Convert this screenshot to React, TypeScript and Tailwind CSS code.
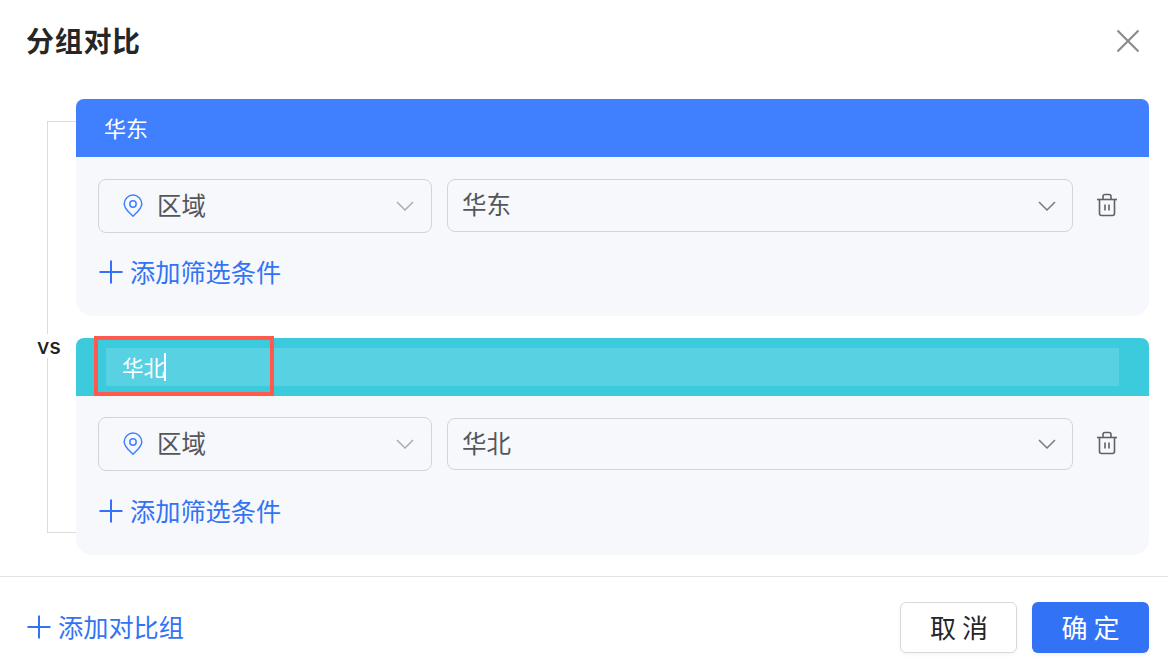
import React from "react";

function Pin() {
  return (
    <svg width="20" height="24" viewBox="0 0 20 24" fill="none" stroke="#4080ff" strokeWidth="1.5">
      <path d="M10 22.2C6.8 19 1.2 14.6 1.2 9.9a8.8 8.8 0 0 1 17.6 0c0 4.7-5.6 9.1-8.8 12.3Z" strokeLinejoin="round" />
      <circle cx="10" cy="10" r="3.2" />
    </svg>
  );
}

function Chevron({ color = "#a9acb3" }: { color?: string }) {
  return (
    <svg width="18" height="10" viewBox="0 0 18 10" fill="none" stroke={color} strokeWidth="1.5">
      <path d="M1 1l8 8 8-8" />
    </svg>
  );
}

function Trash() {
  return (
    <svg width="22" height="24" viewBox="0 0 22 24" fill="none" stroke="#5f6166" strokeWidth="1.6">
      <path d="M1 6.5h20" />
      <path d="M7 6.5V3.5a2 2 0 0 1 2-2h4a2 2 0 0 1 2 2v3" />
      <path d="M3.5 6.5v14a2 2 0 0 0 2 2h11a2 2 0 0 0 2-2v-14" />
      <path d="M9 11.5v6M13 11.5v6" />
    </svg>
  );
}

function Plus() {
  return (
    <svg width="24" height="24" viewBox="0 0 24 24" fill="none" stroke="#3273f6" strokeWidth="2">
      <path d="M0.5 12h23M12 0.5v23" />
    </svg>
  );
}

function Condition({ value, second }: { value: string; second?: boolean }) {
  return (
    <div className={second ? "flex flex-col px-[22px] pt-[21px]" : "flex flex-col px-[22px] pt-[22px]"}>
      <div className="flex items-start">
        <div className="flex h-[54px] w-[334px] items-center rounded-lg border border-[#d3d4d9] pl-[24px] pr-[17px]">
          <Pin />
          <span className="mb-[2px] ml-[14px] flex-1 text-[24.5px] leading-none text-[#555659]">区域</span>
          <Chevron />
        </div>
        <div
          className={
            second
              ? "mt-[1px] ml-[15px] flex h-[52px] w-[626px] items-center justify-between rounded-lg border border-[#d3d4d9] pl-[15px] pr-[16px]"
              : "ml-[15px] flex h-[53px] w-[626px] items-center justify-between rounded-lg border border-[#d3d4d9] pl-[15px] pr-[16px]"
          }
        >
          <span className="mb-[2px] -ml-[1px] text-[24.5px] leading-none text-[#555659]">{value}</span>
          <Chevron color="#77797e" />
        </div>
        <div className="mt-[14px] ml-[23px] flex w-[22px] items-center justify-center">
          <Trash />
        </div>
      </div>
      <div className={second ? "mt-[27px] flex h-[26px] items-center pl-[1px]" : "mt-[26px] flex h-[26px] items-center pl-[1px]"}>
        <Plus />
        <span className="ml-[7px] text-[25.2px] leading-none text-[#3273f6]">添加筛选条件</span>
      </div>
    </div>
  );
}

export default function App() {
  return (
    <div className="flex h-[672px] w-[1168px] flex-col bg-white">
      <div className="flex h-[99px] items-start justify-between pl-[26px] pr-[28px] [font-family:'Noto_Sans_CJK_SC',sans-serif]">
        <h1 className="mt-[20px] text-[28px] leading-[40px] font-bold tracking-[0.7px] text-[#262626]">分组对比</h1>
        <svg className="mt-[29px]" width="24" height="24" viewBox="0 0 24 24" fill="none" stroke="#8c8c8c" strokeWidth="2.2">
          <path d="M1.5 1.5l21 21M22.5 1.5l-21 21" />
        </svg>
      </div>

      <div className="relative flex flex-1 flex-col gap-[22px] pl-[76px] pr-[19px] [font-family:'Noto_Sans_CJK_SC',sans-serif]">
        <div className="absolute top-[22px] left-[47px] h-[412px] w-[29px] border-y border-l border-[#dcdcdc]" />
        <div className="absolute top-[235px] left-[37px] bg-white py-[2px] text-[21.5px] leading-[20px] font-medium text-[#1f1f1f] [font-family:'Inter',sans-serif]">
          vs
        </div>

        <div className="relative h-[217px] rounded-b-2xl rounded-t-lg bg-[#f7f8fc]">
          <div className="flex h-[58px] items-center rounded-t-lg bg-[#4080ff] pb-[3px] pl-[28px]">
            <span className="text-[22px] leading-none text-white">华东</span>
          </div>
          <Condition value="华东" />
        </div>

        <div className="relative h-[217px] rounded-b-2xl rounded-t-lg bg-[#f7f8fc]">
          <div className="flex h-[58px] items-center rounded-t-lg bg-[#3ccbdc] px-[30px]">
            <div className="flex h-[38px] flex-1 items-center bg-[#58d2e3] pl-[16px]">
              <span className="mb-[1px] text-[21.5px] leading-none text-white">华北</span>
              <span className="-ml-[1px] h-[28px] w-[1.5px] bg-white" />
            </div>
          </div>
          <div className="absolute -top-[2px] left-[18px] h-[60px] w-[180px] border-[4px] border-[#ff5a4d]" />
          <Condition value="华北" second />
        </div>
      </div>

      <div className="flex h-[96px] items-start justify-between border-t border-[#e3e3e3] pl-[27px] pr-[19px] pt-[25px] [font-family:'Noto_Sans_CJK_SC',sans-serif]">
        <div className="flex h-[50px] items-center">
          <Plus />
          <span className="ml-[7px] text-[25.2px] leading-none text-[#3273f6]">添加对比组</span>
        </div>
        <div className="flex gap-[15px]">
          <button className="h-[51px] w-[117px] rounded-md border border-[#d9d9d9] bg-white pb-[1px] pl-[7px] text-[26px] leading-none tracking-[6px] text-[#262626] shadow-[0_2px_4px_rgba(0,0,0,0.04)]">
            取消
          </button>
          <button className="h-[51px] w-[117px] rounded-md bg-[#3273f6] pb-[1px] pl-[6px] text-[26px] leading-none tracking-[6px] text-white shadow-[0_2px_4px_rgba(0,0,0,0.06)]">
            确定
          </button>
        </div>
      </div>
    </div>
  );
}
